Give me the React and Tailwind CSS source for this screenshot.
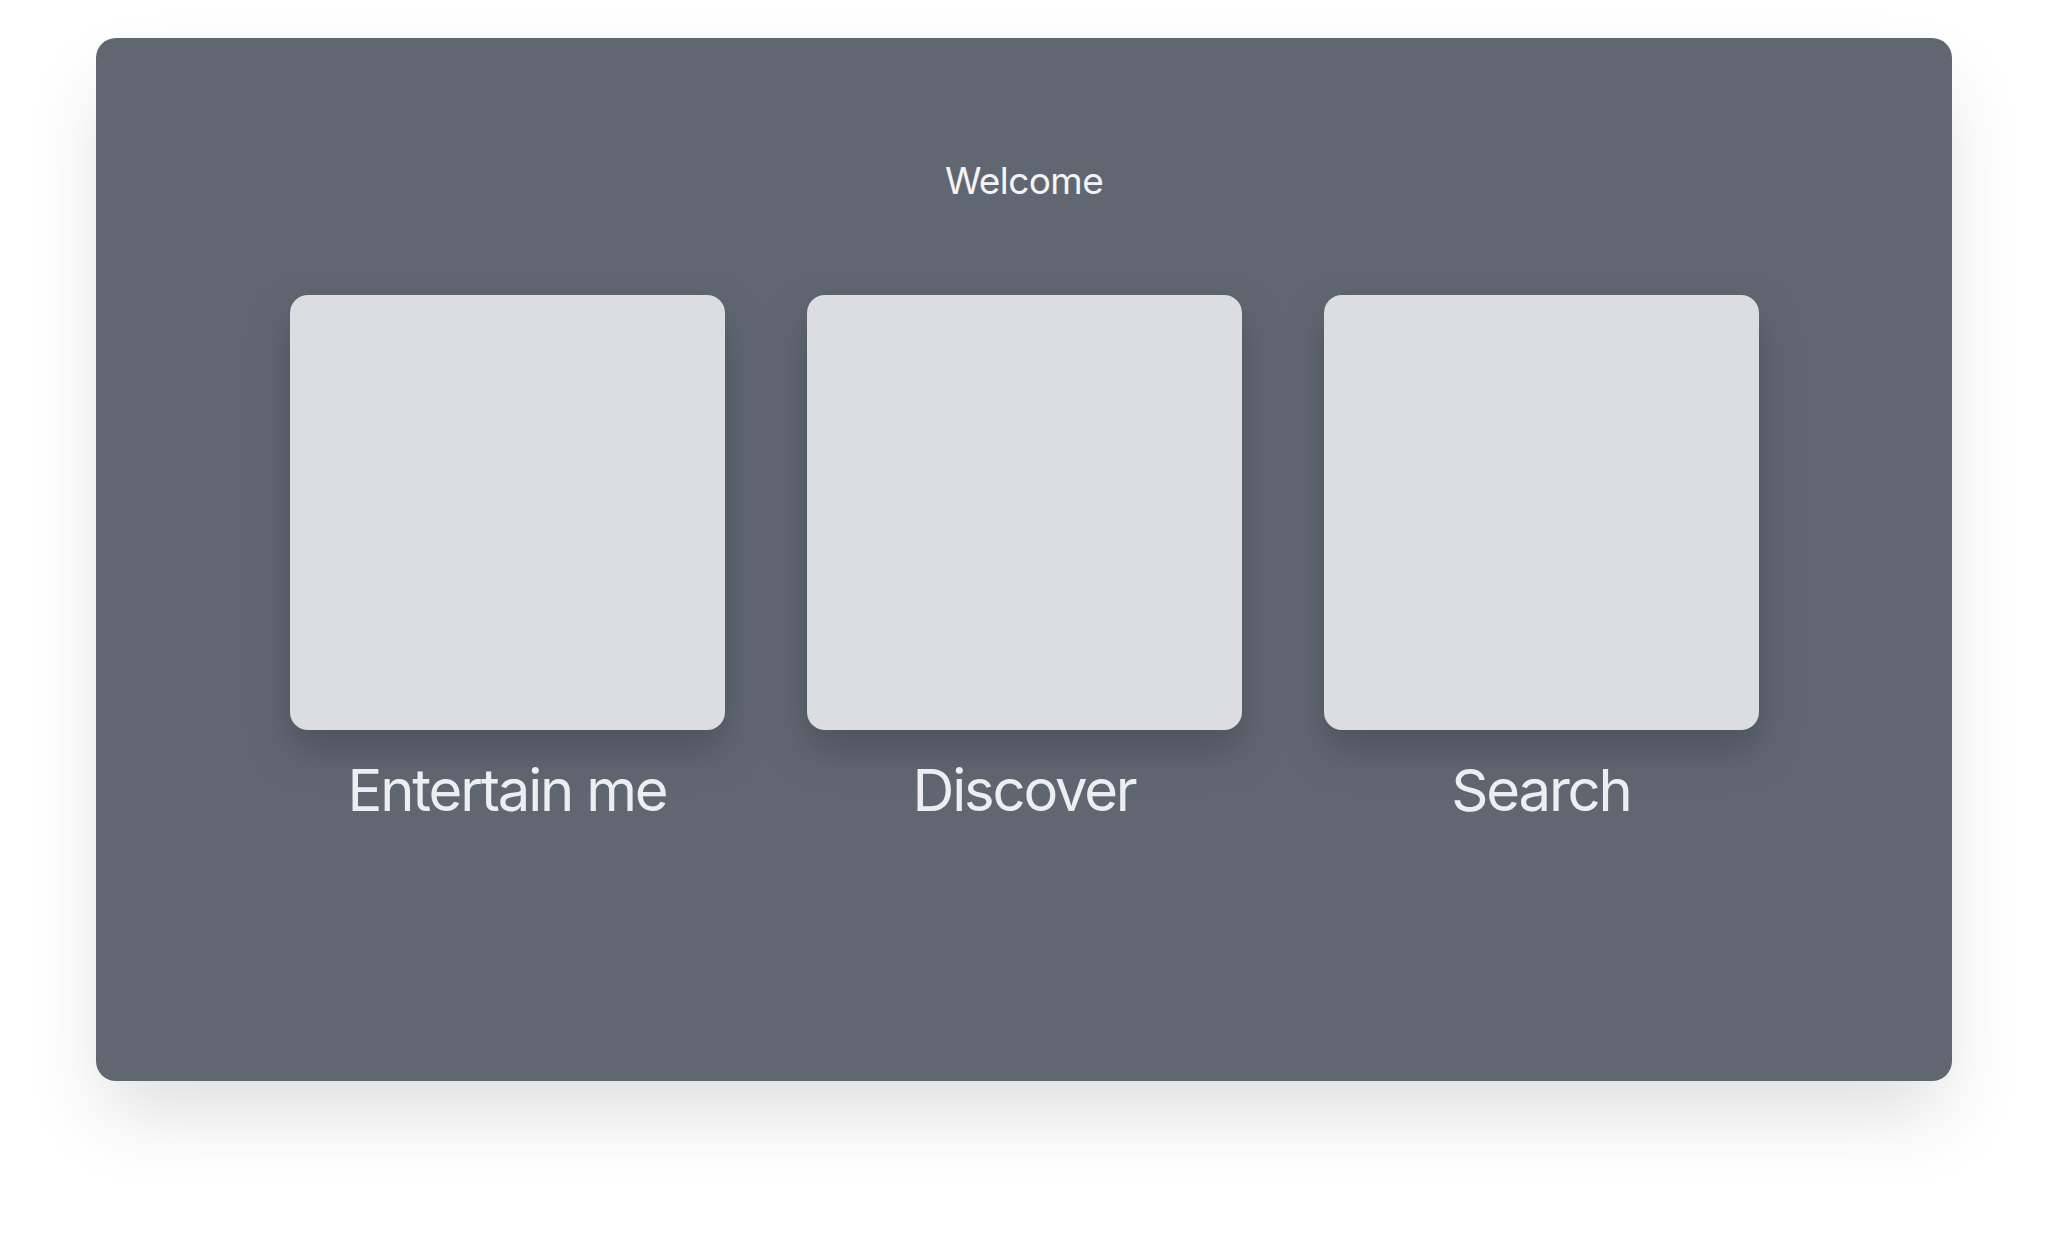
export default function App() {
  const options = ["Entertain me", "Discover", "Search"];

  return (
    <div
      className="min-h-[1235px] w-full bg-white pt-[38px] px-24"
      style={{ fontFamily: "Inter, 'Noto Sans', sans-serif" }}
    >
      {/* main panel */}
      <div className="h-[1043px] rounded-[20px] bg-[#616771] shadow-[0_40px_80px_-8px_rgba(0,0,0,0.13)] flex flex-col items-center pt-[124px]">
        <h1 className="text-[37px] leading-none text-[#f3f4f6] font-normal tracking-[-0.6px]">
          Welcome
        </h1>

        <div className="flex gap-[82px] mt-[96px]">
          {options.map((label) => (
            <div key={label} className="flex flex-col items-center w-[435px]">
              <div className="w-[435px] h-[435px] rounded-[18px] bg-[#dbdde1] shadow-[0_20px_40px_rgba(40,45,55,0.35)]" />
              <p className="mt-[31px] text-[58px] leading-none text-[#eceef1] tracking-[-2.2px]">
                {label}
              </p>
            </div>
          ))}
        </div>
      </div>
    </div>
  );
}
